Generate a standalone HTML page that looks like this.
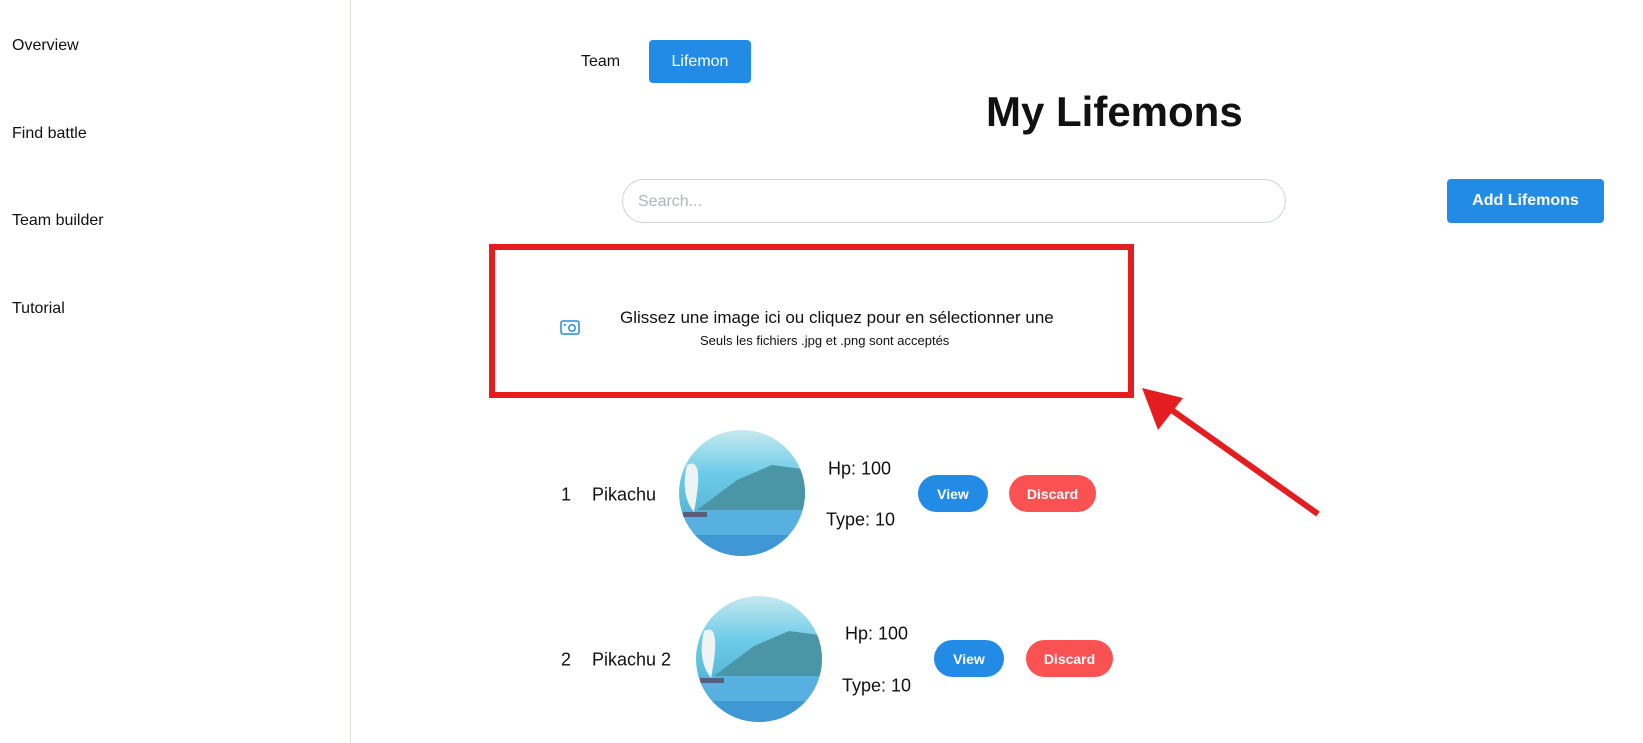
<!DOCTYPE html>
<html><head><meta charset="utf-8"><style>
body{margin:0;width:1643px;height:743px;background:#fff;font-family:"Liberation Sans",sans-serif;color:#111;position:relative;overflow:hidden}
.a{position:absolute;white-space:nowrap}
.nav{left:12px;font-size:16px}
.btn{position:absolute;color:#fff;display:flex;align-items:center;justify-content:center;font-weight:bold;font-size:14px}
.blue{background:#228be6}.red{background:#fa5252}
.t{font-size:18px;transform:translateY(-50%)}
</style></head><body>
<div class="a" style="left:350px;top:0;width:1px;height:743px;background:#dee2e6"></div>
<div class="a nav" style="top:37px">Overview</div>
<div class="a nav" style="top:125px">Find battle</div>
<div class="a nav" style="top:212px">Team builder</div>
<div class="a nav" style="top:300px">Tutorial</div>

<div class="a" style="left:581px;top:53px;font-size:16px">Team</div>
<div class="btn blue" style="left:649px;top:40px;width:102px;height:43px;border-radius:4px;font-weight:normal;font-size:16px">Lifemon</div>
<div class="a" style="left:986px;top:88px;font-size:42px;font-weight:bold">My Lifemons</div>

<div class="a" style="left:622px;top:179px;width:662px;height:42px;border:1px solid #ced4da;border-radius:22px"></div>
<div class="a" style="left:638px;top:193px;font-size:16px;color:#adb5bd">Search...</div>
<div class="btn blue" style="left:1447px;top:179px;width:157px;height:44px;border-radius:4px;font-size:16px">Add Lifemons</div>

<div class="a" style="left:489px;top:244px;width:633px;height:142px;border:6px solid #e41e20"></div>
<svg class="a" style="left:560px;top:320px" width="20" height="15" viewBox="0 0 20 15"><rect x="1" y="1" width="18" height="13" rx="2" fill="none" stroke="#228be6" stroke-width="1.5"/><circle cx="12" cy="8" r="3.2" fill="none" stroke="#228be6" stroke-width="1.5"/><rect x="4" y="4" width="2" height="1.5" fill="#228be6"/></svg>
<div class="a" style="left:620px;top:308px;font-size:17px">Glissez une image ici ou cliquez pour en sélectionner une</div>
<div class="a" style="left:700px;top:333px;font-size:13px">Seuls les fichiers .jpg et .png sont acceptés</div>

<svg class="a" style="left:0;top:0" width="1643" height="743"><line x1="1318" y1="514" x2="1166" y2="406" stroke="#e41e20" stroke-width="6"/><polygon points="1142,388 1183,398 1158,430" fill="#e41e20"/>
<defs><linearGradient id="g" x1="0" y1="0" x2="0" y2="1"><stop offset="0" stop-color="#c6e9ef"/><stop offset=".35" stop-color="#6ccbe9"/><stop offset=".6" stop-color="#5bbbd8"/><stop offset="1" stop-color="#3a93cf"/></linearGradient>
<clipPath id="c"><ellipse cx="742" cy="493" rx="63" ry="63"/></clipPath></defs>
<g id="img" clip-path="url(#c)"><rect x="679" y="430" width="126" height="126" fill="url(#g)"/><path d="M697 510 L737 480 L772 465 L810 470 L810 510 Z" fill="#4a96a6"/><path d="M679 510 L810 510 L810 560 L679 560Z" fill="#58b0e0"/><path d="M679 535 L810 535 L810 560 L679 560Z" fill="#3f98d4"/><path d="M687 465 Q705 455 694 512 Q680 495 687 465Z" fill="#eef4f4"/><rect x="683" y="512" width="24" height="5" fill="#55607a"/></g>
<use href="#img" x="17" y="166"/>
</svg>

<div class="a t" style="left:561px;top:495px">1</div>
<div class="a t" style="left:592px;top:495px">Pikachu</div>
<div class="a t" style="left:828px;top:469px">Hp: 100</div>
<div class="a t" style="left:826px;top:520px">Type: 10</div>
<div class="btn blue" style="left:918px;top:475px;width:70px;height:37px;border-radius:19px">View</div>
<div class="btn red" style="left:1009px;top:475px;width:87px;height:37px;border-radius:19px">Discard</div>

<div class="a t" style="left:561px;top:660px">2</div>
<div class="a t" style="left:592px;top:660px">Pikachu 2</div>
<div class="a t" style="left:845px;top:634px">Hp: 100</div>
<div class="a t" style="left:842px;top:686px">Type: 10</div>
<div class="btn blue" style="left:934px;top:640px;width:70px;height:37px;border-radius:19px">View</div>
<div class="btn red" style="left:1026px;top:640px;width:87px;height:37px;border-radius:19px">Discard</div>
</body></html>
